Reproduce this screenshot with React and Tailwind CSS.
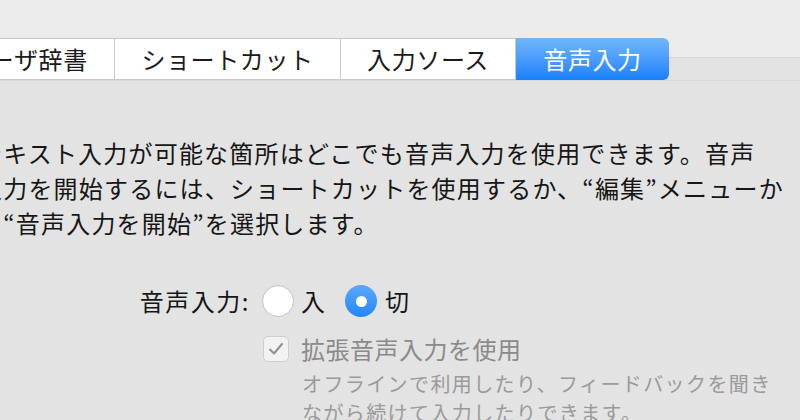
const jp = { fontFamily: '"Noto Sans CJK JP", "Noto Sans", sans-serif' };

const Tab = ({ label, width, active }) => (
    <div
        className={
            active
                ? "flex items-center justify-center h-full rounded-r-[6px] bg-gradient-to-b from-[#72b6fb] to-[#1580fb] text-white"
                : "flex items-center justify-center h-full bg-white border-y border-r border-[#c9c9c9] text-[#1b1b1b]"
        }
        style={{ width }}
    >
        <span className="text-[24px] leading-none tracking-[0.6px]">{label}</span>
    </div>
);

const CheckIcon = () => (
    <svg width="16" height="14" viewBox="0 0 16 14" fill="none">
        <path d="M2 7.5 L6 11.5 L14 2" stroke="#8f8f8f" strokeWidth="2" strokeLinecap="round" strokeLinejoin="round" />
    </svg>
);

export default function App() {
    return (
        <div className="w-[800px] h-[420px] overflow-hidden bg-[#ececec]" style={jp}>
            <div className="h-[57px]" />
            <div className="h-full border-t border-[#d6d6d6] bg-[#e3e3e3]">
                {/* Tab bar */}
                <div className="flex h-[42px] -mt-[20px] ml-[-61px] shadow-[0_1px_0_rgba(0,0,0,0.04)]">
                    <Tab label="ユーザ辞書" width={176} />
                    <Tab label="ショートカット" width={226} />
                    <Tab label="入力ソース" width={175} />
                    <Tab label="音声入力" width={153} active />
                </div>

                {/* Description */}
                <div className="mt-[55px] ml-[-22px] text-[24px] leading-[35px] tracking-[1.2px] text-[#161616] whitespace-nowrap">
                    <p>テキスト入力が可能な箇所はどこでも音声入力を使用できます。音声</p>
                    <p>入力を開始するには、ショートカットを使用するか、“編集”メニューか</p>
                    <p>ら“音声入力を開始”を選択します。</p>
                </div>

                {/* Settings */}
                <div className="mt-[44px] grid grid-cols-[250px_1fr] gap-x-[12px] whitespace-nowrap">
                    <div className="h-[34px] flex items-center justify-end text-[24px] text-[#161616] tracking-[1.5px]">音声入力:</div>
                    <div className="h-[34px] flex items-center text-[24px] text-[#161616]">
                        <span className="w-[32px] h-[32px] rounded-full bg-white border border-[#c4c4c4] shadow-[inset_0_1px_1px_rgba(0,0,0,0.05)]" />
                        <span className="ml-[7px]">入</span>
                        <span className="ml-[20px] w-[32px] h-[32px] rounded-full bg-gradient-to-b from-[#5aa8fb] to-[#1f86fb] flex items-center justify-center">
                            <span className="w-[11px] h-[11px] rounded-full bg-white" />
                        </span>
                        <span className="ml-[8px]">切</span>
                    </div>

                    <div />
                    <div className="mt-[16px] h-[30px] flex items-center text-[24px] text-[#8a8a8a]">
                        <span className="w-[26px] h-[26px] ml-px rounded-[5px] bg-[#f2f2f2] border border-[#cdcdcd] flex items-center justify-center">
                            <CheckIcon />
                        </span>
                        <span className="ml-[12px] tracking-[0.5px]">拡張音声入力を使用</span>
                    </div>

                    <div />
                    <div className="mt-[5px] pl-[40px] text-[20px] leading-[29px] tracking-[1.4px] text-[#9a9a9a]">
                        <p>オフラインで利用したり、フィードバックを聞き</p>
                        <p>ながら続けて入力したりできます。</p>
                    </div>
                </div>
            </div>
        </div>
    );
}
